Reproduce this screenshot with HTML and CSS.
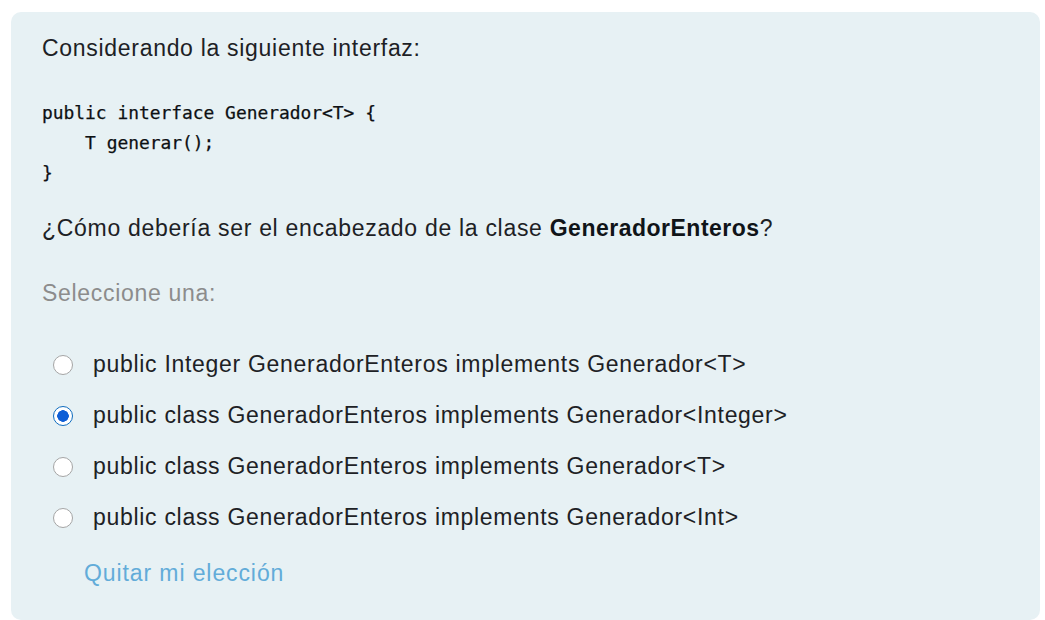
FILE: index.html
```html
<!DOCTYPE html>
<html lang="es">
<head>
<meta charset="utf-8">
<title>Pregunta</title>
<link rel="stylesheet" href="styles.css">
</head>
<body>
<div class="card">
  <p class="intro">Considerando la siguiente interfaz:</p>
  <pre class="code">public interface Generador&lt;T&gt; {
    T generar();
}</pre>
  <p class="question">¿Cómo debería ser el encabezado de la clase <strong>GeneradorEnteros</strong>?</p>
  <p class="prompt">Seleccione una:</p>
  <div class="answers">
    <label class="option"><input type="radio" name="q" class="radio"><span>public Integer GeneradorEnteros implements Generador&lt;T&gt;</span></label>
    <label class="option"><input type="radio" name="q" class="radio" checked><span>public class GeneradorEnteros implements Generador&lt;Integer&gt;</span></label>
    <label class="option"><input type="radio" name="q" class="radio"><span>public class GeneradorEnteros implements Generador&lt;T&gt;</span></label>
    <label class="option"><input type="radio" name="q" class="radio"><span>public class GeneradorEnteros implements Generador&lt;Int&gt;</span></label>
  </div>
  <a class="clear" href="#">Quitar mi elección</a>
</div>
</body>
</html>
```

FILE: styles.css
```css
html, body {
  margin: 0;
  padding: 0;
  background: #ffffff;
}
body {
  font-family: "Liberation Sans", Arial, sans-serif;
  color: #1d2125;
  font-size: 23px;
  letter-spacing: 0.7px;
}
.card {
  margin: 12px 5px 0 11px;
  background: #e7f1f4;
  border-radius: 10px;
  padding: 21px 31px 20px 31px;
  height: 608px;
  box-sizing: border-box;
}
p {
  margin: 0;
  line-height: 30px;
}
.code {
  margin: 35px 0 0 0;
  font-family: "DejaVu Sans Mono", "Liberation Mono", monospace;
  font-size: 17.9px;
  letter-spacing: 0;
  line-height: 30px;
  color: #0d1013;
  -webkit-text-stroke: 0.25px #0d1013;
}
.question {
  margin-top: 25px;
}
.question strong {
  font-weight: bold;
  color: #101418;
  letter-spacing: 0.5px;
}
.prompt {
  margin-top: 35px;
  color: #8c8c8c;
}
.answers {
  margin-top: 31px;
  display: flex;
  flex-direction: column;
}
.option {
  display: flex;
  align-items: center;
  height: 51px;
  padding-left: 11px;
}
.radio {
  appearance: none;
  -webkit-appearance: none;
  margin: 0 20px 0 0;
  width: 20px;
  height: 20px;
  border-radius: 50%;
  border: 1px solid #a5a5a5;
  background: #ffffff;
  box-sizing: border-box;
  flex: none;
}
.radio:checked {
  border: 1.5px solid #0f6cbf;
  background: radial-gradient(circle, #0f5fd6 0 5.5px, #ffffff 6px);
}
.clear {
  display: inline-block;
  margin: 15px 0 0 42px;
  line-height: 30px;
  color: #62acd9;
  text-decoration: none;
  letter-spacing: 0.9px;
}
```
